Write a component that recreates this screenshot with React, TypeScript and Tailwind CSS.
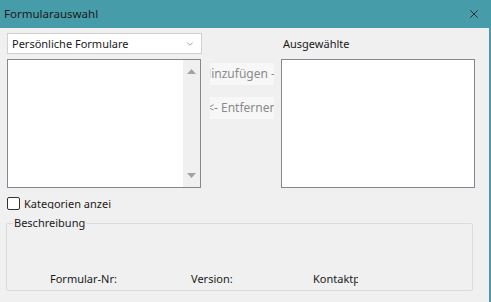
import { ChevronDown, X } from "lucide-react";

function Listbox({ scroll }: { scroll?: boolean }) {
  return (
    <div className="w-[194px] h-[129px] border border-[#828790] bg-white flex justify-end">
      {scroll && (
        <div className="w-[17px] h-full bg-[#f0f0f0] flex flex-col items-center justify-between py-[9px]">
          <svg width="9" height="5" viewBox="0 0 9 5">
            <path d="M0 5 L4.5 0 L9 5 Z" fill="#a3a3a3" />
          </svg>
          <svg width="9" height="5" viewBox="0 0 9 5">
            <path d="M0 0 L4.5 5 L9 0 Z" fill="#a3a3a3" />
          </svg>
        </div>
      )}
    </div>
  );
}

function FlatButton({ label }: { label: string }) {
  return (
    <div className="w-[64px] h-[22px] bg-[#f7f7f7] flex items-center justify-center overflow-hidden whitespace-nowrap text-[12px] text-[#8a8a8a]">
      {label}
    </div>
  );
}

export default function App() {
  return (
    <div
      className="w-[491px] h-[302px] bg-[#f0f0f0] border-r-2 border-[#479ca9] flex flex-col text-[#1a1a1a] overflow-hidden"
      style={{ fontFamily: '"Noto Sans", "Open Sans", sans-serif' }}
    >
      {/* Title bar */}
      <div className="h-[28px] bg-[#479ca9] flex items-center justify-between pl-[4px] pr-[8px] shrink-0">
        <span className="text-[11.5px] leading-none">Formularauswahl</span>
        <X className="w-[14px] h-[14px] text-[#1b1b1b]" strokeWidth={1.4} />
      </div>

      {/* Body */}
      <div className="flex flex-col pl-[7px] pt-[5px]">
        <div className="flex">
          {/* Left column */}
          <div className="flex flex-col gap-[5px]">
            <div className="w-[195px] h-[21px] bg-white border border-[#d0d0d0] flex items-center justify-between pl-[4px] pr-[6px]">
              <span className="text-[11px] leading-none">Persönliche Formulare</span>
              <ChevronDown className="w-[10px] h-[10px] text-[#6b6b6b]" strokeWidth={1.5} />
            </div>
            <Listbox scroll />
          </div>

          {/* Middle buttons */}
          <div className="flex flex-col gap-[12px] ml-[8px] pt-[30px]">
            <FlatButton label="Hinzufügen ->" />
            <FlatButton label="<- Entfernen" />
          </div>

          {/* Right column */}
          <div className="flex flex-col ml-[7px]">
            <div className="h-[26px] flex items-start pl-[2px] pt-[5px]">
              <span className="text-[11px] leading-none">Ausgewählte</span>
            </div>
            <Listbox />
          </div>
        </div>

        {/* Checkbox */}
        <div className="flex items-center gap-[4px] mt-[9px] h-[13px]">
          <div className="w-[13px] h-[13px] border border-[#333] rounded-[2px] bg-white shrink-0" />
          <span className="w-[87px] overflow-hidden whitespace-nowrap text-[11px] leading-none">
            Kategorien anzeigen
          </span>
        </div>

        {/* Group box */}
        <div className="relative mt-[13px] -ml-[1px] w-[467px] h-[68px] border border-[#dcdcdc] rounded-[2px]">
          <span className="absolute -top-[9px] left-[6px] px-[1px] bg-[#f0f0f0] text-[11px] leading-[16px]">
            Beschreibung
          </span>
          <div className="absolute left-0 right-0 bottom-[3px] flex text-[11px] leading-[16px]">
            <span className="ml-[43px] w-[141px]">Formular-Nr:</span>
            <span className="w-[122px]">Version:</span>
            <span className="w-[45px] overflow-hidden whitespace-nowrap">Kontaktperson</span>
          </div>
        </div>
      </div>
    </div>
  );
}
